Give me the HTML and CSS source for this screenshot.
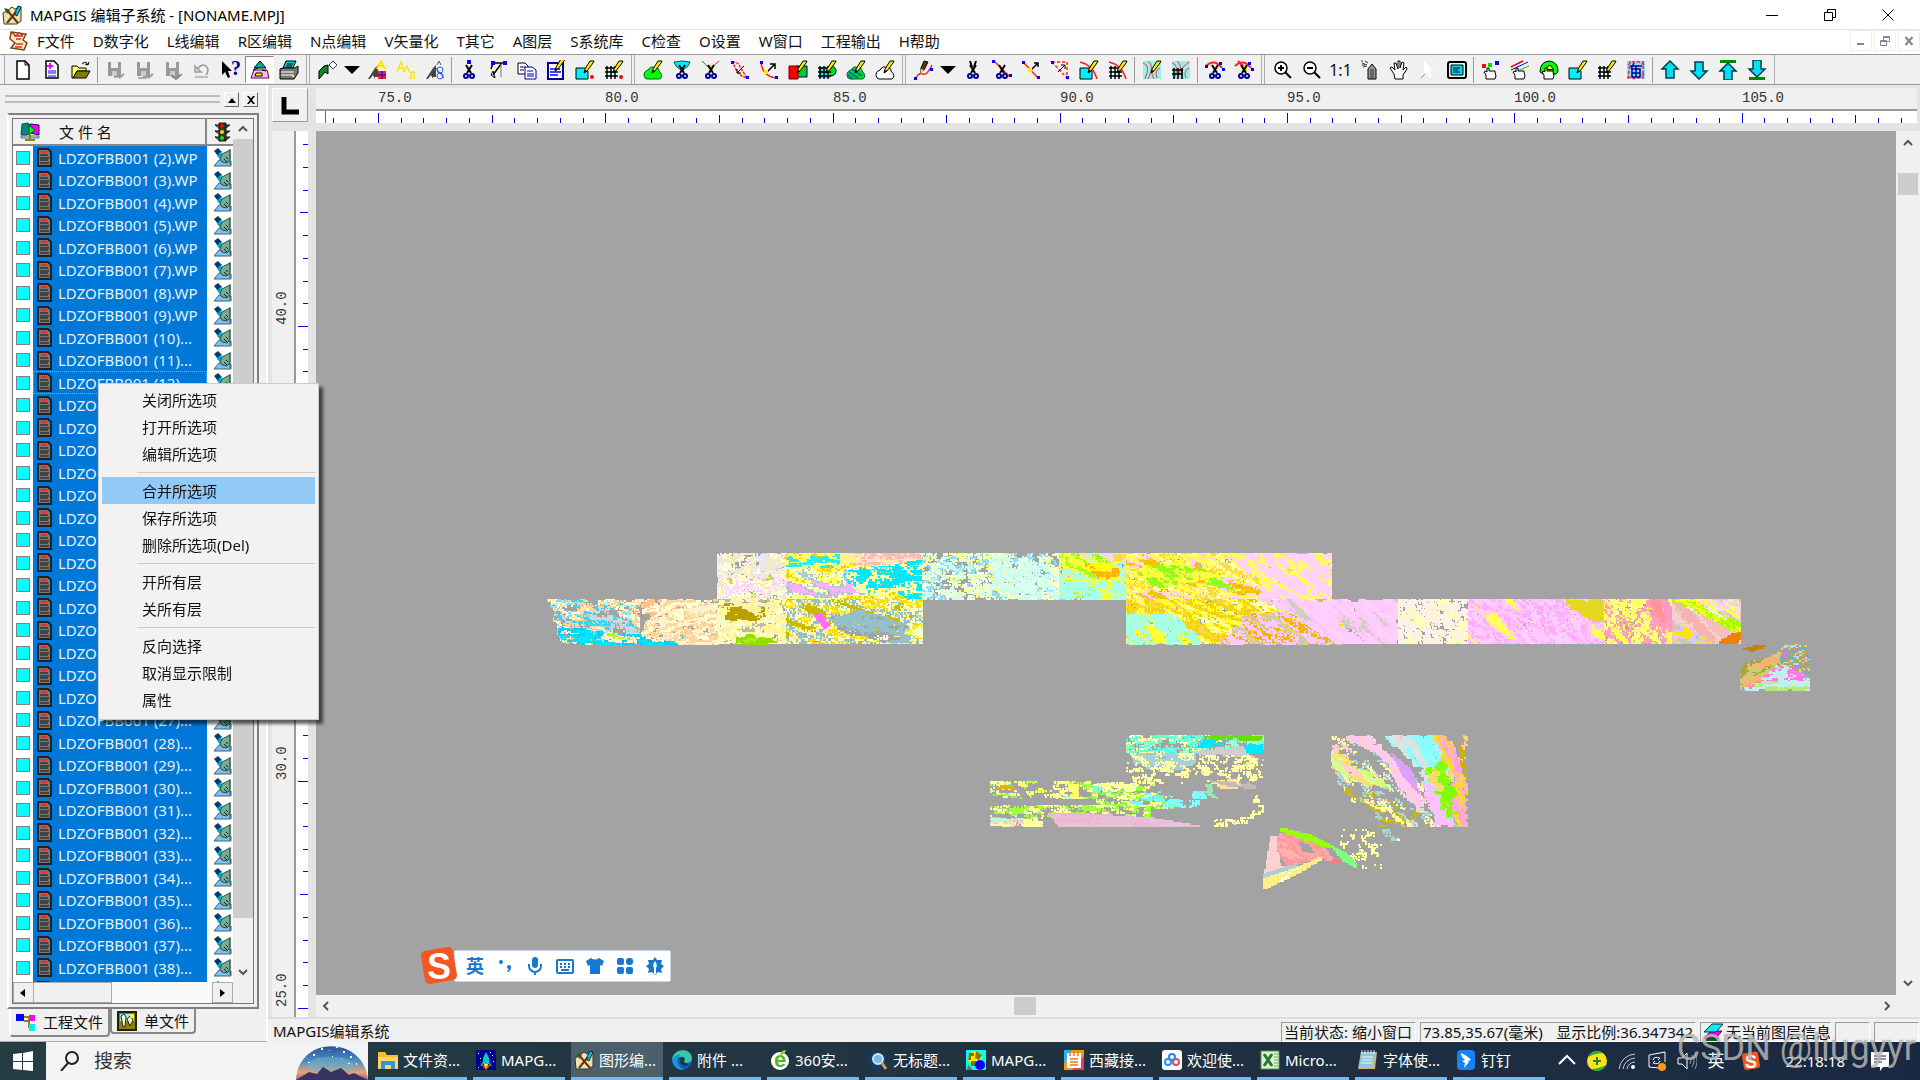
FILE: index.html
```
<!DOCTYPE html>
<html lang="zh-CN">
<head>
  <meta charset="UTF-8" />
  <meta name="viewport" content="width=device-width, initial-scale=1" />
  <title>MAPGIS 编辑子系统 - [NONAME.MPJ]</title>
  <link rel="stylesheet" href="styles.css">
</head>
<body>

  <!-- Title bar -->
  <header class="titlebar">
    <svg class="icon" viewBox="0 0 20 20" data-icon="app"></svg>
    <h1>MAPGIS 编辑子系统 - [NONAME.MPJ]</h1>
    <div class="window-buttons">
      <button aria-label="最小化"><svg viewBox="0 0 12 12"><path d="M0 6.5h12"/></svg></button>
      <button aria-label="还原"><svg viewBox="0 0 12 12"><path d="M.5 3.500h8v8h-8zM3.500 3V.5h8v8H9"/></svg></button>
      <button aria-label="关闭"><svg viewBox="0 0 12 12"><path d="M.5.5l11 11M11.500.5l-11 11"/></svg></button>
    </div>
  </header>

  <!-- Menu bar -->
  <nav class="menubar">
    <svg class="icon" viewBox="0 0 20 20" data-icon="doc"></svg>
    <button>F文件</button>
    <button>D数字化</button>
    <button>L线编辑</button>
    <button>R区编辑</button>
    <button>N点编辑</button>
    <button>V矢量化</button>
    <button>T其它</button>
    <button>A图层</button>
    <button>S系统库</button>
    <button>C检查</button>
    <button>O设置</button>
    <button>W窗口</button>
    <button>工程输出</button>
    <button>H帮助</button>
    <div class="child-buttons">
      <button aria-label="最小化子窗口"><svg viewBox="0 0 12 12"><path d="M2 9h7"/></svg></button>
      <button aria-label="还原子窗口"><svg viewBox="0 0 12 12"><path class="thin" d="M1.500 5.500h6v5h-6zM1 6.500h7M4.500 5V1.500h6v5H8M4 2.500h7"/></svg></button>
      <button aria-label="关闭子窗口"><svg viewBox="0 0 12 12"><path d="M2.500 2l7 8M9.500 2l-7 8"/></svg></button>
    </div>
  </nav>

  <!-- Filled from the icon groups in app.js -->
  <div class="toolbar" id="toolbar"></div>

  <main class="main">
    <aside class="sidebar">
      <div class="dock-head">
        <div class="dock-grip"></div>
        <button aria-label="收起"><svg viewBox="0 0 10 10"><path d="M1 8l4-5 4 5z"/></svg></button>
        <button aria-label="关闭面板"><svg viewBox="0 0 10 10"><path d="M1 1h2l2 2.500L7 1h2L6 5l3 4H7L5 6.500 3 9H1l3-4z"/></svg></button>
      </div>

      <div class="tree-frame">
        <div class="tree">
          <div class="tree-view">
            <table class="files">
              <colgroup><col class="col-check"><col><col class="col-edit"></colgroup>
              <thead>
                <tr>
                  <th colspan="2"><span class="th-name"><svg class="icon" viewBox="0 0 20 20" data-icon="tree"></svg>文 件 名</span></th>
                  <th><svg class="icon" viewBox="0 0 20 20" data-icon="light"></svg></th>
                </tr>
              </thead>
              <tbody id="fileRows"></tbody>
            </table>
          </div>
          <div class="scroll-v">
            <button aria-label="向上"><svg viewBox="0 0 10 10"><path d="M1 7l4-4 4 4"/></svg></button>
            <div class="thumb tree-thumb"></div>
            <button aria-label="向下"><svg viewBox="0 0 10 10"><path d="M1 3l4 4 4-4"/></svg></button>
          </div>
          <div class="tree-hscroll">
            <button aria-label="向左"><svg viewBox="0 0 10 10"><path d="M7 1v8L2 5z"/></svg></button>
            <div class="tree-hthumb"></div>
            <button aria-label="向右"><svg viewBox="0 0 10 10"><path d="M3 1v8l5-4z"/></svg></button>
          </div>
        </div>
      </div>

      <div class="tabs">
        <button class="tab active"><svg class="icon" viewBox="0 0 20 20" data-icon="project"></svg>工程文件</button>
        <button class="tab"><svg class="icon" viewBox="0 0 20 20" data-icon="single"></svg>单文件</button>
      </div>

      <!-- Context menu of the file list -->
      <div class="context-menu">
        <button>关闭所选项</button>
        <button>打开所选项</button>
        <button>编辑所选项</button>
        <hr>
        <button class="selected">合并所选项</button>
        <button>保存所选项</button>
        <button>删除所选项(Del)</button>
        <hr>
        <button>开所有层</button>
        <button>关所有层</button>
        <hr>
        <button>反向选择</button>
        <button>取消显示限制</button>
        <button>属性</button>
      </div>
    </aside>

    <section class="workspace">
      <div class="corner"><button aria-label="标尺原点"><svg viewBox="0 0 18 18"><path d="M3 0v15h15" /></svg></button></div>
      <svg class="ruler-h" id="rulerH"></svg>
      <svg class="ruler-v" id="rulerV"></svg>
      <div class="map">
        <canvas id="map"></canvas>
        <div class="ime">
          <svg class="ime-logo" viewBox="0 0 40 40">
            <path d="M5 5 29 1q4 0 5 4l4 24q0 4-4 5l-23 4q-4 0-5-4L2 10q0-4 3-5z" fill="#f4561f"/>
            <text x="20" y="33" text-anchor="middle">S</text>
          </svg>
          <div class="ime-bar">
            <button>英</button>
            <button aria-label="标点"><svg viewBox="0 0 18 18"><circle cx="5" cy="5" r="2"/><circle cx="13" cy="10" r="2"/><path d="M15 10q0 4-3 5l-1-1q2-1 2-3z"/></svg></button>
            <button aria-label="语音"><svg viewBox="0 0 18 18"><rect x="6" y="0" width="6" height="11" rx="3"/><path d="M3 7v2a6 6 0 0 0 12 0V7M9 15v3" fill="none" stroke="#1678d3" stroke-width="2"/></svg></button>
            <button aria-label="键盘"><svg viewBox="0 0 18 18"><rect x="1" y="3" width="16" height="13" rx="1" fill="none" stroke="#1678d3" stroke-width="2"/><path d="M4 6h2v2H4zM8 6h2v2H8zM12 6h2v2h-2zM4 9h2v2H4zM8 9h2v2H8zM12 9h2v2h-2zM5 12h8v2H5z"/></svg></button>
            <button aria-label="皮肤"><svg viewBox="0 0 18 18"><path d="M5 1q4 3 8 0l5 3-2 5-2-1v9H4V8L2 9 0 4z"/></svg></button>
            <button aria-label="工具箱"><svg viewBox="0 0 18 18"><rect x="1" y="1" width="7" height="7" rx="2"/><rect x="10" y="1" width="7" height="7" rx="3"/><rect x="1" y="10" width="7" height="7" rx="2"/><rect x="10" y="10" width="7" height="7" rx="2"/></svg></button>
            <button aria-label="设置"><svg viewBox="0 0 18 18"><path d="M9 0l2 3 5 0-1 4 3 2-3 3 1 4-4-1-3 3-3-3-4 1 1-4-3-3 3-2-1-4 5 0z"/><path d="M9 4q3 4 1 7v6H8v-6q-2-3 1-7z" fill="#fff"/></svg></button>
          </div>
        </div>
      </div>
      <div class="scroll-v map-scroll">
        <button aria-label="地图向上"><svg viewBox="0 0 10 10"><path d="M1 7l4-4 4 4"/></svg></button>
        <div class="thumb map-vthumb"></div>
        <button class="last" aria-label="地图向下"><svg viewBox="0 0 10 10"><path d="M1 3l4 4 4-4"/></svg></button>
      </div>
      <div class="scroll-h">
        <button aria-label="地图向左"><svg viewBox="0 0 10 10"><path d="M7 1L3 5l4 4"/></svg></button>
        <div class="track"><div class="thumb map-hthumb"></div></div>
        <button aria-label="地图向右"><svg viewBox="0 0 10 10"><path d="M3 1l4 4-4 4"/></svg></button>
      </div>
      <footer class="status">
        <span class="status-main">MAPGIS编辑系统</span>
        <span class="pane state">当前状态: 缩小窗口</span>
        <span class="pane coords"><span>73.85,35.67(毫米)</span><span>显示比例:36.347342</span></span>
        <span class="pane layer"><svg class="icon" viewBox="0 0 20 20" data-icon="layer"></svg>无当前图层信息</span>
        <span class="pane small"></span>
        <span class="pane last"></span>
      </footer>
    </section>
  </main>

  <!-- Windows taskbar -->
  <footer class="taskbar">
    <button class="start" aria-label="开始"><svg viewBox="0 0 20 20"><path d="M0 3l9-1v8H0zM10 2l10-2v10H10zM0 11h9v8l-9-1zM10 11h10v9l-10-1z" fill="#fff"/></svg></button>
    <div class="search">
      <svg class="lens" viewBox="0 0 20 20"><circle cx="12" cy="7" r="6"/><path d="M8 12l-7 8"/></svg>
      <input type="text" placeholder="搜索" aria-label="搜索">
      <svg class="art" viewBox="0 0 72 38">
        <defs>
          <linearGradient id="sky" x1="0" y1="0" x2="0" y2="1">
            <stop offset="0" stop-color="#27408f"/><stop offset=".5" stop-color="#4a8fc4"/><stop offset=".8" stop-color="#e6a27c"/><stop offset="1" stop-color="#9b6280"/>
          </linearGradient>
          <clipPath id="dome"><path d="M0 38C2-7 68-7 72 38z"/></clipPath>
        </defs>
        <g clip-path="url(#dome)">
          <rect width="72" height="38" fill="url(#sky)"/>
          <ellipse cx="35" cy="24" rx="24" ry="9" fill="#73b4be" opacity=".5"/>
          <path d="M0 38l13-8 8 2 6-7 8 5 10-4 8 7 5-2 14 7z" fill="#363361"/>
          <path d="M17 12h2v2h-2zM25 6h2v2h-2zM33 8h1v1h-1zM40 4h2v2h-2zM47 9h2v2h-2zM54 14h2v2h-2zM12 20h2v1h-2zM60 21h1v2h-1zM22 16h1v1h-1zM45 16h1v1h-1zM30 4h1v1h-1zM52 21h2v1h-2zM36 14h1v1h-1z" fill="#fff"/>
        </g>
      </svg>
    </div>
    <div class="tasks" id="tasks"></div>
    <div class="tray">
      <svg class="tray-icon" viewBox="0 0 20 20"><path d="M2 13l8-8 8 8" fill="none" stroke="#fff" stroke-width="2"/></svg>
      <svg class="tray-icon" viewBox="0 0 20 20"><circle cx="10" cy="10" r="10" fill="#ffe11d"/><path d="M1 6A10 10 0 0 1 16 2q-7 0-15 4zM19 14A10 10 0 0 1 4 18q8 0 15-4z" fill="#1eaa4b"/><path d="M10 6v8M6 10h8" stroke="#168a32" stroke-width="2"/></svg>
      <svg class="tray-icon" viewBox="0 0 20 20"><g fill="none" stroke="#ccd" stroke-width="1"><path d="M2 18A17 17 0 0 1 18 3M6 18A13 13 0 0 1 18 7M10 18A8 8 0 0 1 18 11"/></g><circle cx="16" cy="16" r="2" fill="#fff"/></svg>
      <svg class="tray-icon" viewBox="0 0 20 20"><path d="M12 17l-10-1V4l16-3v10" fill="none" stroke="#fff"/><path d="M6 9q1-4 7-2l-2 2M13 10q-1 4-7 2l2-2" fill="none" stroke="#fff"/><circle cx="15" cy="16" r="4" fill="#ff9a13"/></svg>
      <svg class="tray-icon" viewBox="0 0 20 20"><path d="M1 7h4l5-5v16l-5-5H1z" fill="none" stroke="#fff"/><path d="M13 7q2 3 0 6M15 4q4 6 0 12M18 2q4 8 0 16" fill="none" stroke="#8b97a6"/></svg>
      <span class="lang">英</span>
      <svg class="tray-icon sogou" viewBox="0 0 40 40"><path d="M5 5 29 1q4 0 5 4l4 24q0 4-4 5l-23 4q-4 0-5-4L2 10q0-4 3-5z" fill="#f4561f"/><text x="20" y="33" text-anchor="middle">S</text></svg>
      <time>22:18:18</time>
      <svg class="tray-icon note" viewBox="0 0 20 20"><path d="M1 1h18v15h-6l-3 4v-4H1z" fill="#fff"/><path d="M4 5h12M4 8h12M4 11h8" stroke="#1c2c40" stroke-width="1"/></svg>
    </div>
    <span class="watermark">CSDN @liugyyr</span>
  </footer>

  <script src="app.js"></script>
</body>
</html>
```

FILE: styles.css
```
* {
  box-sizing: border-box;
}
body {
  margin: 0;
  height: 100vh;
  display: flex;
  flex-direction: column;
  overflow: hidden;
  background: #f0f0f0;
  color: #111;
  font-family: "Noto Sans", "Noto Sans CJK SC", sans-serif;
  font-size: 15px;
  line-height: 20px;
}
button {
  font: inherit;
  color: inherit;
  background: none;
  border: none;
  padding: 0;
  margin: 0;
  white-space: nowrap;
}
svg {
  display: block;
  flex: none;
}
.icon {
  width: 20px;
  height: 20px;
}

/* Title and menu */
.titlebar {
  height: 29px;
  display: flex;
  align-items: center;
  gap: 8px;
  padding-left: 2px;
  background: #fff;
}
.titlebar h1 {
  margin: 0;
  font-size: 15px;
  font-weight: normal;
  color: #000;
}
.window-buttons {
  margin-left: auto;
  display: flex;
  margin-right: 3px;
}
.window-buttons button {
  width: 58px;
  height: 28px;
  display: flex;
  align-items: center;
  justify-content: center;
}
.window-buttons svg {
  width: 12px;
  height: 12px;
  fill: none;
  stroke: #000;
}
.menubar {
  height: 25px;
  display: flex;
  align-items: center;
  gap: 18px;
  padding: 0 0 3px 9px;
  background: #fff;
  border-top: 1px solid #e3e3e3;
}
.menubar .icon {
  margin-right: -10px;
}
.child-buttons {
  margin-left: auto;
  display: flex;
  gap: 2px;
}
.child-buttons button {
  width: 22px;
  height: 21px;
  padding: 4px;
  border: 1px solid #eee;
}
.child-buttons svg {
  width: 12px;
  height: 12px;
  fill: none;
  stroke: #7b8794;
  stroke-width: 2;
}
.child-buttons .thin {
  stroke-width: 1;
}

/* Toolbar */
.toolbar {
  height: 31px;
  display: flex;
  border-top: 1px solid #999;
  border-bottom: 1px solid #999;
  padding-left: 4px;
}
.tool-group {
  display: flex;
  align-items: center;
  padding: 0 3px;
  margin-right: 2px;
  border-left: 1px solid #aaa;
  border-right: 1px solid #aaa;
}
.tool {
  width: 29px;
  height: 27px;
  display: flex;
  align-items: center;
  justify-content: center;
  font-size: 16px;
}
.tool.drop {
  width: 20px;
}
.tool.pressed {
  background: #fafafa;
  border: 1px solid #888;
  border-right-color: #fff;
  border-bottom-color: #fff;
}
.tool-sep {
  width: 1px;
  height: 26px;
  margin: 0 2px;
  background: #999;
}

/* Sidebar */
.main {
  flex: 1;
  min-height: 0;
  display: flex;
}
.sidebar {
  position: relative;
  width: 268px;
  flex: none;
  display: flex;
  flex-direction: column;
  border-right: 2px solid #fff;
  border-bottom: 1px solid #aaa;
}
.dock-head {
  height: 28px;
  display: flex;
  align-items: center;
  gap: 4px;
  padding: 0 8px 0 5px;
}
.dock-grip {
  flex: 1;
  height: 8px;
  border-top: 2px solid #bbb;
  border-bottom: 2px solid #bbb;
}
.dock-head button {
  width: 15px;
  height: 15px;
  padding: 2px;
  border: 1px solid #fff;
  border-right-color: #666;
  border-bottom-color: #666;
}
.dock-head svg {
  width: 10px;
  height: 10px;
}
.tree-frame {
  flex: 1;
  min-height: 0;
  display: flex;
  margin: 0 7px;
  padding: 3px;
  border: 2px solid #808080;
  border-left-color: #fff;
}
.tree {
  flex: 1;
  min-height: 0;
  display: grid;
  grid-template-columns: 1fr 20px;
  grid-template-rows: 1fr 21px;
  border: 1px solid #777;
}
.tree-view {
  overflow: hidden;
  background: #fff;
  min-height: 0;
}
.files {
  width: 100%;
  table-layout: fixed;
  border-collapse: separate;
  border-spacing: 0;
}
.col-check {
  width: 20px;
}
.col-edit {
  width: 26px;
}
.files th {
  height: 27px;
  padding: 0 2px;
  background: #f0f0f0;
  border-right: 2px solid #888;
  border-bottom: 2px solid #888;
  font-weight: normal;
  text-align: left;
}
.files th:last-child {
  border-right: none;
  padding-left: 5px;
}
.th-name {
  display: flex;
  align-items: center;
  gap: 19px;
  padding-left: 5px;
}
.files td {
  height: 23px;
  padding: 0;
}
.files tr:nth-child(even) td {
  height: 22px;
}
.files input {
  appearance: none;
  display: block;
  width: 14px;
  height: 14px;
  margin: 0 3px;
  border: 1px solid #808080;
  background: #0ff;
}
.files .name-cell {
  padding-left: 4px;
  background: #0078d7;
  color: #e4f1fc;
  font-size: 15px;
}
.files .focus .name-cell {
  outline: 1px dotted #e09050;
  outline-offset: -1px;
}
.files .edit-cell {
  padding-left: 5px;
  border-left: 1px solid #fff;
}
.name {
  display: flex;
  align-items: center;
  gap: 6px;
  height: 22px;
  white-space: nowrap;
}
.name svg {
  width: 15px;
  height: 19px;
}
.edit-cell svg {
  width: 19px;
  height: 19px;
}
.scroll-v {
  display: flex;
  flex-direction: column;
  justify-content: space-between;
  background: #f0f0f0;
}
.scroll-v button,
.scroll-h button {
  width: 20px;
  height: 20px;
  padding: 5px;
}
.scroll-v svg,
.scroll-h svg {
  width: 10px;
  height: 10px;
  fill: none;
  stroke: #555;
  stroke-width: 2;
}
.thumb {
  background: #cdcdcd;
}
.tree-thumb {
  flex: 1;
  margin-bottom: 44px;
}
.tree-hscroll {
  display: flex;
  background: #fafafa;
}
.tree-hscroll button {
  width: 21px;
  padding: 4px;
  background: #f0f0f0;
  border: 1px solid #aaa;
}
.tree-hscroll button:last-child {
  margin-left: auto;
}
.tree-hscroll svg {
  width: 10px;
  height: 10px;
}
.tree-hthumb {
  width: 78px;
  background: #f0f0f0;
  border: 1px solid #aaa;
  border-left: none;
}
.tabs {
  height: 32px;
  display: flex;
  align-items: flex-start;
  padding-left: 9px;
}
.tab {
  display: flex;
  align-items: center;
  gap: 7px;
  height: 25px;
  padding: 0 5px;
  border: 2px solid #888;
  border-top: none;
  border-radius: 0 0 4px 4px;
}
.tab.active {
  height: 28px;
  border-left-color: #fff;
}

/* Context menu */
.context-menu {
  position: absolute;
  left: 98px;
  top: 298px;
  width: 221px;
  padding: 2px 3px 6px;
  background: #f2f2f2;
  border: 1px solid #ccc;
  box-shadow: 4px 4px 3px rgba(0,0,0,0.6);
  z-index: 2;
}
.context-menu button {
  display: block;
  width: 100%;
  height: 27px;
  padding-left: 40px;
  text-align: left;
}
.context-menu .selected {
  background: #91c9f7;
}
.context-menu hr {
  height: 1px;
  margin: 5px 0 4px 35px;
  border: none;
  background: #ccc;
}

/* Map window */
.workspace {
  flex: 1;
  min-width: 0;
  display: grid;
  grid-template-columns: 48px 1fr 24px;
  grid-template-rows: 46px 1fr 22px 25px;
  background: #e4e4e4;
}
.corner {
  padding: 3px 4px;
}
.corner button {
  width: 36px;
  height: 34px;
  padding: 8px;
  background: #f0f0f0;
  border: 1px solid #fff;
  border-right-color: #999;
  border-bottom-color: #999;
}
.corner svg {
  width: 18px;
  height: 18px;
  fill: none;
  stroke: #000;
  stroke-width: 5;
}
.ruler-h {
  grid-column: 2 / 4;
  width: 100%;
  height: 38px;
}
.ruler-v {
  grid-row: 2 / 4;
  width: 40px;
  height: 100%;
}
.ruler-h text,
.ruler-v text {
  font: 14px "Liberation Mono", monospace;
  fill: #333;
}
.map {
  position: relative;
  grid-column: 2;
  grid-row: 2;
  min-height: 0;
  overflow: hidden;
  background: #a3a3a3;
}
.map canvas {
  display: block;
}
.map-scroll {
  justify-content: flex-start;
  padding: 2px;
}
.map-vthumb {
  height: 22px;
  margin-top: 20px;
}
.map-scroll .last {
  margin-top: auto;
}
.scroll-h {
  grid-column: 2 / 4;
  grid-row: 3;
  display: flex;
  align-items: center;
  justify-content: space-between;
  padding-right: 23px;
  background: #f0f0f0;
}
.track {
  flex: 1;
  height: 18px;
}
.map-hthumb {
  width: 22px;
  height: 18px;
  margin-left: 44%;
}
.status {
  grid-column: 1 / 4;
  display: flex;
  gap: 4px;
  padding: 3px 1px 0 5px;
  border-top: 2px solid #ddd;
  background: #f0f0f0;
  line-height: 18px;
}
.status-main {
  flex: 1;
}
.pane {
  height: 20px;
  padding: 0 2px;
  border: 1px solid #fff;
  border-top-color: #999;
  border-left-color: #999;
  white-space: nowrap;
  overflow: hidden;
}
.pane.state {
  width: 135px;
}
.pane.coords {
  width: 276px;
  display: flex;
  justify-content: space-between;
}
.pane.layer {
  width: 131px;
  display: flex;
  gap: 3px;
}
.pane.small {
  width: 35px;
}
.pane.last {
  width: 45px;
}

/* Sogou input bar */
.ime {
  position: absolute;
  left: 103px;
  bottom: 9px;
  display: flex;
  align-items: center;
}
.ime-logo {
  width: 40px;
  height: 40px;
  z-index: 1;
}
.ime-logo text,
.sogou text {
  font: bold 36px "Liberation Sans", sans-serif;
  fill: #fff;
}
.ime-bar {
  display: flex;
  align-items: center;
  height: 32px;
  margin-left: -5px;
  padding: 0 0 0 5px;
  background: #fff;
  border: 1px solid #c4d9ee;
  border-radius: 2px;
}
.ime-bar button {
  width: 30px;
  display: flex;
  justify-content: center;
  color: #1678d3;
  font-size: 18px;
  font-weight: bold;
}
.ime-bar svg {
  width: 18px;
  height: 18px;
  fill: #1678d3;
}

/* Taskbar */
.taskbar {
  position: relative;
  height: 38px;
  display: flex;
  background: linear-gradient(90deg, #243d45 0%, #203341 50%, #1a2942 100%);
  color: #fff;
}
.start {
  width: 46px;
  display: flex;
  align-items: center;
  justify-content: center;
}
.start svg {
  width: 20px;
  height: 20px;
}
.search {
  width: 322px;
  display: flex;
  align-items: center;
  gap: 14px;
  padding-left: 14px;
  background: #f3f3f3;
}
.lens {
  width: 20px;
  height: 20px;
  fill: none;
  stroke: #222;
  stroke-width: 2;
}
.search input {
  flex: 1;
  min-width: 0;
  border: none;
  padding: 0;
  background: none;
  font: 19px/28px "Noto Sans", "Noto Sans CJK SC", sans-serif;
}
.search input::placeholder {
  color: #333;
}
.art {
  width: 72px;
  height: 38px;
}
.tasks {
  flex: 1;
  min-width: 0;
  display: flex;
  gap: 6px;
  padding-left: 7px;
}
.task {
  width: 92px;
  display: flex;
  align-items: center;
  gap: 5px;
  padding-left: 3px;
  border-bottom: 3px solid #76b9ed;
  overflow: hidden;
}
.task.active {
  background: #4b606a;
}
.tray {
  display: flex;
  align-items: center;
  gap: 10px;
  padding-right: 30px;
}
.tray-icon {
  width: 20px;
  height: 20px;
}
.lang {
  width: 20px;
  font-size: 17px;
}
.sogou {
  margin: 0 4px;
}
.tray time {
  margin: 0 15px 0 10px;
}
.watermark {
  position: absolute;
  right: 4px;
  top: -14px;
  font: 36px/40px Roboto, sans-serif;
  color: rgba(255,255,255,0.6);
  text-shadow: 0 0 1px rgba(0,0,0,0.6);
}
```

FILE: app.js
```
// ---------- icons, all on a 20x20 grid ----------
const pencil = '<path d="M19 1l-4 0-5 8-1 4 3-2 6-8z" fill="#ffe600" stroke="#000"/><path d="M9 13l1-3 2 1z"/>';
const scissors = '<path d="M7 5l5 8M13 5l-5 8" stroke="#000" stroke-width="2"/><g fill="none" stroke="#00009c" stroke-width="2"><circle cx="7" cy="16" r="2"/><circle cx="13" cy="16" r="2"/></g>';
const hand = '<path d="M5 19v-4l-2-3 2-1 1 1V8h2v3h2v0h2v0h2v1l1 4-1 3z" fill="#fff" stroke="#000"/>';
const grid = '<path d="M2 7h11v11H2z" fill="#dff"/><path d="M1 8h13M1 12h13M1 16h13M3 6v13M7 6v13M11 6v13" stroke="#000" stroke-width="1.500"/>';
const page = '<path d="M1 8h9l3 3v8H1z" fill="#00f0ff" stroke="#000"/>';
const nodes = '<path d="M1 1h3v3H1zM16 16h3v3h-3z" fill="#00f"/>';
const floppy = '<path d="M3 2h13v14H3z" fill="#999"/><path d="M6 2h7v6H6z" fill="#eee"/><path d="M7 11h5v5H7z" fill="#ccc"/><path d="M9 17l7-1M14 18l5-4" stroke="#999" stroke-width="2"/>';
const blob = 'M2 18q-3-6 3-8 3-5 7-2 4-1 4 3 5 5 1 8H4z';
const contour = '<path d="M1 1h18v18H1z" fill="#9ee"/><g fill="none" stroke="#e44"><path d="M1 3q8 2 2 16M6 1q7 5 0 18M18 2q-12 8-6 17M18 8q-6 3-3 10"/></g>';
const arrow = '<path d="M10 1l8 8h-4v9H6V9H2z" fill="#00e0f0" stroke="#003c50" stroke-width="1.500"/>';
const man = '<path d="M1 19l7-11 3-3v12H8v2l-2-4-3 4z" fill="#444"/>';

const icons = {
  app: '<path d="M1 8l4-2 5-4 3 2 6-2v14l-4 3H2z" fill="#f4dfa6" stroke="#333"/><path d="M2 3l6 2-3 4z" fill="#178a3a"/><path d="M12 9l4-8 3 1-4 9z" fill="#00c3e8" stroke="#123"/><path d="M4 4l12 14M14 7L5 18" stroke="#5d3418" stroke-width="2"/>',
  doc: '<path d="M2 1l15 2-3 6 4 3-3 7-13-2 4-5-5-4z" fill="#ffe9b8" stroke="#7b4518" stroke-width="1.500"/><path d="M5 5l9 0M7 8l5 0M7 13l7 0M6 16l7 0M3 2l4 3 3-3 4 2" stroke="#c33" stroke-width="1.500" fill="none"/>',
  'new': '<path d="M4 1h8l4 4v14H4z" fill="#fff" stroke="#000" stroke-width="1.500"/><path d="M12 1v4h4" fill="none" stroke="#000"/>',
  report: '<path d="M4 1h8l4 4v13H4z" fill="#fff" stroke="#000" stroke-width="1.500"/><path d="M8 3v6M5 6h6" stroke="#f0f" stroke-width="2"/><path d="M6 11h8M6 13h8M6 16h8" stroke="#00f"/>',
  open: '<path d="M1 6h5l2 2h7v3H6l-4 7H1z" fill="#ff6" stroke="#000"/><path d="M6 11h13l-4 7H2z" fill="#808000" stroke="#000"/><path d="M11 4q4-4 6 1l1-3M17 5l-3-1" fill="none" stroke="#000"/>',
  save: floppy,
  saveAs: floppy + '<path d="M4 18h9" stroke="#aaa" stroke-width="2"/>',
  saveAll: floppy + '<path d="M8 15l5 4 4-4" stroke="#888" fill="none" stroke-width="2"/>',
  undo: '<path d="M3 6l0 6h6zM5 10q4-7 9-4 4 4 0 9" fill="none" stroke="#999" stroke-width="1.500"/><path d="M3 17h13" stroke="#bbb" stroke-width="2"/>',
  help: '<path d="M1 1v14l3-3 3 6 2-1-2-6h4z"/><text x="10" y="15" fill="#00009c" font-size="20" font-weight="bold" font-family="Liberation Serif">?</text>',
  board: '<path d="M10 1l6 7H4z" fill="#0a9" stroke="#000"/><path d="M4 10h13l2 8H1z" fill="#f8bbf0" stroke="#5b0060"/><path d="M6 13h6v3H5z" fill="#ff0" stroke="#000"/><path d="M3 10l5-2M12 10l4 1" stroke="#000"/>',
  print: '<path d="M7 1h10l-3 7H4z" fill="#0cc" stroke="#000"/><path d="M8 4h6M7 6h6" stroke="#000"/><path d="M1 9l3-1h12l3-2v7l-4 6H1z" fill="#777" stroke="#000"/><path d="M2 12h13M2 15h12" stroke="#fff"/><path d="M13 16h2" stroke="#ff0" stroke-width="2"/>',
  point: '<path d="M1 19v-8l5-5 4-1v9l-3-2z" fill="#0a8a1a" stroke="#000"/><path d="M11 5l4-4 4 4-4 4z" fill="#fff" stroke="#446"/>',
  drop: '<path d="M2 6h16l-8 8z"/>',
  pointA: man + '<path d="M10 9l4-8 4 8M11 6h6" stroke="#ffe600" fill="none" stroke-width="2"/><path d="M11 11h8v8h-8z" fill="#e22"/><path d="M11 15h8M15 11v8" stroke="#00f"/>',
  letters: '<path d="M1 12l4-10 3 10M3 8h4M8 12l3-6 3 7M14 18l2-6h2v6z" stroke="#ffe600" stroke-width="1.500" fill="none"/>',
  pointB: man + '<g fill="none" stroke="#35d"><circle cx="15" cy="10" r="3"/><circle cx="15" cy="16" r="3"/><path d="M11 8l8 10"/></g><path d="M12 5l2-4 2 4" fill="none" stroke="#555"/>',
  cutNode: '<path d="M8 0h4v4H8z" fill="#00f"/>' + scissors,
  move: '<path d="M5 3h13M13 4L5 15M5 3l-2 6" stroke="#000" fill="none" stroke-width="1.500"/><path d="M3 15l4 3-2-7z" fill="none" stroke="#000"/><path d="M3 1h4v4H3zM15 1h4v4h-4z" fill="#00f"/><path d="M13 4v13" stroke="#777"/>',
  copy: '<path d="M1 3h7l3 3v8H1z" fill="#fff" stroke="#000"/><path d="M8 7h7l4 3v9H8z" fill="#fff" stroke="#00009c"/><path d="M3 7h5M3 10h4M10 11h6M10 14h7M10 16h7" stroke="#00009c"/>',
  editText: '<path d="M2 3h15v16H2z" fill="#fff" stroke="#00009c" stroke-width="2"/><path d="M4 9h10M4 12h11M4 15h8" stroke="#00f" stroke-width="1.500"/><g transform="translate(0 -2)">' + pencil + '</g>',
  pastePen: page + pencil + '<circle cx="17" cy="17" r="2" fill="#f00"/>',
  gridPen: grid + pencil + '<circle cx="17" cy="17" r="2" fill="#f00"/>',
  area: `<path d="${blob}" fill="#0f0" stroke="#063"/>` + pencil,
  areaCut: '<path d="M2 2q8-2 16 0l-2 4-6 5-6-5z" fill="#00f0ff" stroke="#055"/>' + scissors,
  arcCut: '<path d="M1 1l8 8 9-8" stroke="#f22" fill="none"/><path d="M8 5h4v5H8z" fill="#ffe600"/>' + scissors,
  arcNode: '<path d="M2 2q7 0 8 5l7 11q-10-2-14-16" fill="none" stroke="#f22" stroke-width="1.500" stroke-dasharray="3 1"/><path d="M14 6l-7 7M7 9v4h4" stroke="#000" fill="none"/>' + nodes,
  arcMove: '<path d="M2 2q1 14 15 16" fill="none" stroke="#f22" stroke-width="1.500"/><path d="M7 13l9-9M11 4h5v5" stroke="#000" fill="none" stroke-width="1.500"/><path d="M5 10h4v4H5z" fill="#ffe600"/>' + nodes,
  areaRed: '<path d="M8 6h11v11H8z" fill="#0c3" stroke="#005"/><path d="M1 6h9v13H1z" fill="#f00" stroke="#600"/>' + pencil,
  areaGrid: '<circle cx="14" cy="11" r="5" fill="#0d2" stroke="#004"/><path d="M2 7h11v11H2z" fill="#0ee"/>' + grid.slice(grid.indexOf('/>') + 2) + pencil,
  areaHatch: `<path d="${blob}" fill="#0d2" stroke="#063"/><path d="M3 12l9 6M6 9l10 7M2 15l5 4" stroke="#00709c" stroke-width="2"/>` + pencil,
  areaEmpty: `<path d="${blob}" fill="#fff" stroke="#000"/>` + pencil,
  line: '<path d="M2 18q3-6 7-4t9-9" fill="none" stroke="#f22" stroke-width="1.500"/><path d="M10 1l4 1-4 8-3 3v-5z" fill="#631" stroke="#000"/><path d="M7 9l3 1-3 4z" fill="#ffe600"/><path d="M0 17h3v3H0zM16 8h3v3h-3z" fill="#00f"/>',
  cut: scissors + '<path d="M7 1l2 6M13 1l-2 6" stroke="#000" stroke-width="2"/>',
  cutLine: '<path d="M2 1l16 16" stroke="#f22" stroke-width="1.500"/>' + scissors + '<path d="M0 0h3v3H0zM17 14h3v3h-3z" fill="#00f"/>',
  lineMove: '<path d="M2 2l15 16" stroke="#f22" stroke-width="1.500"/><path d="M9 11l8-8M13 3h4v4" stroke="#000" fill="none" stroke-width="1.500"/><path d="M7 8h4v4H7z" fill="#ffe600"/>' + nodes,
  lineCopy: '<path d="M2 2h15v16zM2 2l15 0" fill="none" stroke="#f22" stroke-width="1.500" stroke-dasharray="3 2"/><path d="M8 12l7-7M11 5h4v4" stroke="#000" fill="none"/>' + nodes,
  linePage: page + '<path d="M1 2q13 3 17 17" fill="none" stroke="#f22" stroke-width="1.500"/>' + pencil,
  lineGrid: grid + '<path d="M1 2q13 3 17 17" fill="none" stroke="#f22" stroke-width="1.500"/>' + pencil,
  contour: contour + pencil,
  contourGrid: contour + '<path d="M1 10h11M1 14h11M3 8v11M7 8v11M11 8v11" stroke="#000" stroke-width="1.500"/>',
  joinCut: '<path d="M1 6q8-8 16 2" fill="none" stroke="#f22" stroke-width="2"/><path d="M0 5h3v3H0zM14 2h3v3h-3zM17 8h3v3h-3z" fill="#00f"/><path d="M8 8h3v4H8z" fill="#ffe600"/>' + scissors,
  joinX: '<path d="M1 6q8-8 16 2M4 1l8 8" fill="none" stroke="#f22" stroke-width="2"/><path d="M14 2h3v3h-3zM17 8h3v3h-3z" fill="#00f"/><path d="M9 6h4v6H9z" fill="#ffe600"/>' + scissors,
  zoomIn: '<circle cx="8" cy="8" r="6" fill="#fff" stroke="#000" stroke-width="1.500"/><path d="M5 8h6M8 5v6M12 12l6 6" stroke="#000" stroke-width="2"/>',
  zoomOut: '<circle cx="8" cy="8" r="6" fill="#fff" stroke="#000" stroke-width="1.500"/><path d="M5 8h6M12 12l6 6" stroke="#000" stroke-width="2"/>',
  spray: '<path d="M8 9l4-5 4 5v10H8z" fill="#999" stroke="#000"/><path d="M11 9v10M13 9v10M2 3l5 2M3 7l4-1M1 1h2M5 1l3 2M2 5h3" stroke="#333"/>',
  pan: '<path d="M6 19l-1-5-4-6 2-1 3 3-1-7 2 0 2 6V1h2v7l2-6 2 1-1 7 3-3 1 2-4 6v4z" fill="#fff" stroke="#000"/>',
  pointer: '<path d="M6 1l9 10h-4l3 6-2 1-3-6-3 3z" fill="#fff"/><path d="M3 18l4-4" stroke="#888"/>',
  screen: '<rect x="1" y="2" width="18" height="16" rx="2" fill="#dff" stroke="#000" stroke-width="2"/><path d="M4 5h12v10H4z" fill="#00d8e8" stroke="#000"/><path d="M6 8h7M6 10h5M6 12h7" stroke="#003"/>',
  pickPoint: '<path d="M1 4h4v4H1z" fill="#f00"/><path d="M7 3h4v4H7z" fill="#0d0"/><path d="M14 1h4v4h-4z" fill="#00f"/>' + hand,
  pickLine: '<path d="M1 7l12-6" stroke="#f00" stroke-width="1.500"/><path d="M1 10L18 2" stroke="#00f"/><path d="M5 12L19 6" stroke="#0c0"/>' + hand,
  pickArea: '<path d="M1 12q0-10 9-11 9 1 9 10-1 4-5 3l-3-3-5 4z" fill="#0f0" stroke="#000"/><path d="M6 9l5-4 4 5z" fill="#ff0" stroke="#000"/>' + hand,
  pagePen: page + pencil,
  tablePen: grid + pencil,
  find: '<path d="M1 1h18v18H1z" fill="#8de"/><path d="M2 5q8-7 16 0M2 16q8 6 16-2M4 1l-2 18M17 1v18" stroke="#e24" stroke-width="1.500" fill="none" stroke-dasharray="3 2"/><path d="M6 9h8v8H6zM4 6h12M8 3l-3 6M6 13h8M10 6v11" stroke="#00009c" stroke-width="1.500" fill="none"/>',
  up: arrow,
  down: `<g transform="rotate(180 10 10)">${arrow}</g>`,
  top: '<path d="M2 0h16v3H2z" fill="#080"/><g transform="translate(0 2)">' + arrow + '</g>',
  bottom: '<path d="M2 17h16v3H2z" fill="#080"/><g transform="rotate(180 10 9)">' + arrow + '</g>',
  tree: '<path d="M2 2l6-1 4 5-5 7H1z" fill="#088" stroke="#055"/><path d="M10 2l9 1v10l-8-2z" fill="#f0f" stroke="#206"/><path d="M9 3l6 5-6 5z" fill="#0f0" stroke="#050"/><path d="M1 14h18v2H1z" fill="#cde" stroke="#577"/><path d="M10 13v5M5 18h10" stroke="#880" stroke-width="2"/>',
  light: '<path d="M7 1h7v18H7zM3 3h15l-4 3zM3 9h15l-4 3zM3 15h15l-4 3zM3 3l5 4M3 9l5 4M3 15l5 4" stroke="#222" fill="#333"/><circle cx="10" cy="4" r="2" fill="#f00"/><circle cx="10" cy="10" r="2" fill="#fd0"/><circle cx="10" cy="16" r="2" fill="#0e0"/>',
  project: '<path d="M7 5h6v11M8 9h5" stroke="#880" stroke-width="2" fill="none"/><path d="M0 2h8v7H0z" fill="#00f"/><path d="M13 3h6v6h-6z" fill="#f0f"/><path d="M13 12h6v7h-6z" fill="#0ee"/>',
  single: '<path d="M1 1h18v18H1z" fill="#8a8200" stroke="#220" stroke-width="2"/><path d="M3 3h14v7H3z" fill="#8ef"/><path d="M4 5l3-2 2 3-1 9-2 1-1-6zM10 8l3-3 3 4-3 6z" fill="#ffc" stroke="#222"/><circle cx="15" cy="5" r="2" fill="#ff0"/>',
  layer: '<ellipse cx="9" cy="16" rx="7" ry="4" fill="#060"/><path d="M8 8h11l-6 7H1z" fill="#f0f" stroke="#222"/><path d="M9 1h11l-7 8H1z" fill="#00f0ff" stroke="#222"/>',
  folder: '<path d="M0 2h7l2 3h11v13H0z" fill="#ffb92e"/><path d="M0 7h20v12H0z" fill="#ffd75e"/><path d="M3 11h14v8h-4v-4H7v4H3z" fill="#2f94dd"/>',
  rocket: '<path d="M0 0h20v20H0z" fill="#00008b"/><path d="M10 2l3 6v6H7V8z" fill="#0cc"/><path d="M7 11l-3 5h3zM13 11l3 5h-3z" fill="#0a5"/><path d="M8 14h4l1 3-3 3-3-3z" fill="#f50"/><path d="M8 14h4l-2 4z" fill="#ff0"/><path d="M2 3h1v1H2zM16 5h1v1h-1zM4 8h1v1H4zM17 11h1v1h-1zM2 17h1v1H2zM14 2h1v1h-1z" fill="#fff"/>',
  edge: '<circle cx="10" cy="10" r="10" fill="#0c62b8"/><path d="M0 9C2-2 19-3 20 8q0 5-6 5-3 0-2-3 0-4-5-3-6 1-7 2z" fill="#37c7a6"/><path d="M0 10q3-6 9-5-5 3-3 9 2 4 6 6-10 0-12-10z" fill="#1f94dc"/><path d="M8 10q0-3 3-3 3 1 1 4 0 3 6 3-4 3-8 1-2-2-2-5z" fill="#203341"/>',
  b360: '<circle cx="10" cy="11" r="9" fill="#fff"/><text x="10" y="17" text-anchor="middle" font-size="22" font-weight="bold" font-family="Liberation Sans" fill="#55b82c">e</text><path d="M10 5q1-5 6-5-1 5-6 5z" fill="#8bd443"/>',
  lens: '<circle cx="9" cy="10" r="9" fill="#123e6b"/><circle cx="10" cy="9" r="5" fill="#73bce0" stroke="#d9e3ea" stroke-width="2"/><path d="M14 13l4 6" stroke="#c96" stroke-width="3"/>',
  globe: '<path d="M0 0h20v20H0z" fill="#0ff"/><circle cx="9" cy="8" r="7" fill="#ffe600"/><path d="M3 3h5v3H5v4H2zM10 1l6 4-3 5-4-2zM5 11h5v5H5z" fill="#7c7b00"/><circle cx="14" cy="15" r="5" fill="#00f"/><path d="M2 15l5 5H1z" fill="#7c7b00"/>',
  notes: '<rect width="20" height="20" fill="#f39b18"/><path d="M0 0h8L0 14z" fill="#27b4e3"/><path d="M20 6v14H8z" fill="#e43b66"/><path d="M3 3h14v15H3z" fill="#fff"/><path d="M6 1v5M10 1v5M14 1v5M6 9h8M6 12h8M6 15h8" stroke="#e47b22" stroke-width="1.500"/>',
  cloud: '<rect width="20" height="20" rx="3" fill="#fff"/><g fill="none" stroke-width="2"><circle cx="6" cy="12" r="3" stroke="#159bf3"/><circle cx="14" cy="12" r="3" stroke="#e9445a"/><circle cx="10" cy="7" r="3" stroke="#2f82ee"/></g>',
  excel: '<path d="M1 1h18v18H1z" fill="#dff0d8" stroke="#4d9a4b"/><path d="M14 4h4M14 7h4M14 10h4M14 13h4M14 16h4" stroke="#6aa84f"/><path d="M4 4l8 12M12 4L4 16" stroke="#287b2b" stroke-width="3"/>',
  notepad: '<path d="M3 2h16l-2 17H0z" fill="#d8b36a"/><path d="M3 2h14l-2 16H1z" fill="#8fc8dd"/><path d="M4 0v4M7 0v4M10 0v4M13 0v4M16 0v4" stroke="#eee"/><path d="M4 7h11M4 10h10M3 13h11" stroke="#dff"/>',
  ding: '<rect x="1" width="18" height="20" rx="4" fill="#1583f7"/><path d="M5 3q7 3 10 7l-3 1 1 1-5 6 1-5-3-2 3-1q-4-3-4-7z" fill="#fff"/>'
};

function iconSvg(name) {
  return `<svg class="icon" viewBox="0 0 20 20">${icons[name]}</svg>`;
}

document.querySelectorAll('[data-icon]').forEach(el => {
  el.innerHTML = icons[el.dataset.icon];
});

// ---------- toolbar ----------
const toolGroups = [
  'new report open | save saveAs saveAll undo help board print',
  'point drop pointA letters pointB | cutNode move copy editText pastePen gridPen',
  'area areaCut arcCut arcNode arcMove areaRed areaGrid areaHatch areaEmpty',
  'line drop cut cutLine lineMove lineCopy linePage lineGrid | contour contourGrid | joinCut joinX',
  'zoomIn zoomOut 1:1 spray pan pointer screen | pickPoint pickLine pickArea pagePen tablePen find | up down top bottom'
];

document.getElementById('toolbar').innerHTML = toolGroups.map(group => {
  const items = group.split(' ').map(name => {
    if (name === '|') return '<span class="tool-sep"></span>';
    if (name === '1:1') return '<button class="tool">1:1</button>';
    const extra = name === 'drop' ? ' drop' : name === 'board' ? ' pressed' : '';
    return `<button class="tool${extra}" aria-label="${name}">${iconSvg(name)}</button>`;
  });
  return `<div class="tool-group">${items.join('')}</div>`;
}).join('');

// ---------- file list ----------
const fileIcon = '<svg viewBox="0 0 15 19"><path d="M1 1h10l3 3v14H1z" fill="#777" stroke="#222" stroke-width="2"/><path d="M4 4h6" stroke="#f22" stroke-width="2"/><path d="M3 7h8M3 10h9M3 12h8M3 15h9" stroke="#111"/></svg>';
const editIcon = '<svg viewBox="0 0 19 19"><path d="M1 18l5-6 12 1v5z" fill="#86bdf0" stroke="#367"/><path d="M1 3l4-3 4 4-4 4z" fill="#073a6b"/><path d="M7 4l3 3-3 4-3-3z" fill="#00a9e0"/><path d="M9 6l8-4v9l-3 4-5-1-2-3z" fill="#76ad91" stroke="#254"/><path d="M17 1v16" stroke="#356"/><path d="M11 11l3 3M13 9l2 2" stroke="#122"/></svg>';

let rows = '';
for (let i = 2; i <= 39; i++) {
  const label = `LDZOFBB001 (${i})` + (i < 10 ? '.WP' : '...');
  rows += `<tr${i === 12 ? ' class="focus"' : ''}>
    <td><input type="checkbox" id="file${i}"></td>
    <td class="name-cell"><label class="name" for="file${i}">${fileIcon}${label}</label></td>
    <td class="edit-cell">${editIcon}</td>
  </tr>`;
}
document.getElementById('fileRows').innerHTML = rows;

// ---------- taskbar ----------
const tasks = [
  ['folder', '文件资...'], ['rocket', 'MAPG...'], ['app', '图形编...'], ['edge', '附件 ...'],
  ['b360', '360安...'], ['lens', '无标题...'], ['globe', 'MAPG...'], ['notes', '西藏接...'],
  ['cloud', '欢迎使...'], ['excel', 'Micro...'], ['notepad', '字体使...'], ['ding', '钉钉']
];
document.getElementById('tasks').innerHTML = tasks.map(([icon, text], i) =>
  `<button class="task${i === 2 ? ' active' : ''}">${iconSvg(icon)}${text}</button>`).join('');

// ---------- rulers ----------
const DEG = 45.45; // pixels per degree

function drawRulerH() {
  const svg = document.getElementById('rulerH');
  const w = svg.clientWidth - 3;
  let s = `<rect y="3" width="${w}" height="21" fill="#f0f0f0"/><rect y="24" width="${w}" height="2" fill="#999"/><rect y="26" width="${w}" height="12" fill="#fff"/>`;
  for (let k = -2; 62 + k * DEG / 2 < w; k++) {
    const x = Math.round(62 + k * DEG / 2);
    const h = k % 10 === 0 ? 10 : k % 5 === 0 ? 8 : 5;
    s += `<rect x="${x}" y="${38 - h}" width="1" height="${h}" fill="#00f"/>`;
    if (k % 10 === 0) s += `<text x="${x}" y="17">${(75 + k / 2).toFixed(1)}</text>`;
  }
  svg.innerHTML = s + '<rect x="9" y="26" width="1" height="12" fill="#f0f"/>';
}

function drawRulerV() {
  const svg = document.getElementById('rulerV');
  const h = svg.clientHeight;
  let s = `<rect x="4" width="22" height="${h}" fill="#f0f0f0"/><rect x="26" width="2" height="${h}" fill="#999"/><rect x="28" width="12" height="${h}" fill="#fff"/>`;
  for (let k = -8; 195 + k * DEG / 2 < h; k++) {
    const y = Math.round(195 + k * DEG / 2);
    const len = k % 10 === 0 ? 10 : k % 5 === 0 ? 8 : 5;
    s += `<rect x="${40 - len}" y="${y}" width="${len}" height="1" fill="#00f"/>`;
    if (k % 10 === 0) s += `<text transform="translate(18 ${y - 1}) rotate(-90)">${(40 - k / 2).toFixed(1)}</text>`;
  }
  svg.innerHTML = s;
}

// ---------- geological map ----------
function hash(x, y) {
  let h = Math.imul(x, 374761393) + Math.imul(y, 668265263) | 0;
  h = Math.imul(h ^ (h >>> 13), 1274126177);
  return ((h ^ (h >>> 16)) >>> 0) / 4294967296;
}
function noise(x, y) {
  const xi = Math.floor(x), yi = Math.floor(y);
  const fx = x - xi, fy = y - yi;
  const a = hash(xi, yi), b = hash(xi + 1, yi), c = hash(xi, yi + 1), d = hash(xi + 1, yi + 1);
  return a + (b - a) * fx + (c - a) * fy + (a - b - c + d) * fx * fy;
}
function inside(p, x, y) {
  let hit = false;
  for (let i = 0, j = p.length - 2; i < p.length; j = i, i += 2) {
    if ((p[i + 1] > y) !== (p[j + 1] > y) &&
        x < (p[j] - p[i]) * (y - p[i + 1]) / (p[j + 1] - p[i + 1]) + p[i]) hit = !hit;
  }
  return hit;
}

// poly, colours, strike angle, bed length, bed thickness, share left empty
const box = (x, y, r, b) => [x, y, r, y, r, b, x, b];
const beds = [
  // upper strip
  [box(717, 553, 786, 599), '#ffffd2 #e8e4ff #f2ecb8 #ffffd2 #ffd6ff #ffffd2 #c8d465', -0.2, 20, 9, 0.3],
  [box(786, 553, 922, 599), '#ffff5e #ffe6b8 #ffff5e #f2cf0a #ffff5e #ffffc8 #a9c8cf #ffb0ff', 0.2, 34, 10, 0.14],
  [[786, 556, 840, 553, 838, 568, 786, 566], '#22eaff #ffff5e #22eaff', 0.1, 14, 5, 0.3],
  [box(855, 553, 922, 564), '#ffe9b8 #ffb9b9 #ffe9b8 #ffffc8', 0.1, 30, 4, 0.1],
  [[844, 572, 862, 568, 922, 560, 922, 598, 904, 598, 886, 590, 858, 592], '#00e8ff #00e8ff #ffffa8 #00e8ff', 0.2, 16, 6, 0.22],
  [box(922, 553, 1059, 599), '#8fdcff #ffff8a #d5ffe9 #ffffd0 #8fdcff #c5ffee', 0.2, 14, 7, 0.44],
  [[990, 560, 1004, 555, 1059, 566, 1059, 599, 1000, 599], '#c9ffe8 #d9fff0 #c9ffe8 #ffffc8', 0.5, 20, 7, 0.4],
  [box(1059, 553, 1126, 599), '#ffff3c #a0ff20 #ffff3c #a8ffe8 #ffe0a8', 0.3, 20, 9, 0.26],
  [[1059, 580, 1100, 578, 1126, 566, 1126, 599, 1059, 599], '#a8ffe8 #a8ffe8 #ffff3c', 0.3, 16, 6, 0.28],
  [[1084, 566, 1110, 562, 1120, 574, 1104, 580], '#ffff00 #ffb400', 0.3, 12, 6, 0.1],
  [[1095, 553, 1126, 553, 1126, 562, 1110, 560], '#ffc8ff #ffd6e8 #ffd640', 0.3, 16, 5, 0.1],
  [box(1126, 553, 1331, 599), '#ffff42 #ffd640 #ffffa0 #ffff42 #ffd0f8 #f5c400', 0.35, 22, 6, 0.2],
  [[1136, 568, 1180, 562, 1210, 570, 1240, 592, 1200, 580, 1150, 586], '#90ff20 #ffff42 #a8f020', 0.5, 14, 7, 0.3],
  [[1226, 553, 1331, 553, 1331, 599, 1258, 599, 1262, 580], '#ffd2fc #ffd2fc #ffd2fc #ffff58 #ffd2fc', 0.7, 28, 9, 0.16],
  // lower strip, western part
  [[547, 599, 640, 599, 640, 644, 565, 644], '#fff1cc #8cdcff #ffffc8 #ffd49b #30d8ff #d5d5d5', 0.3, 20, 6, 0.42],
  [[558, 627, 580, 628, 620, 634, 692, 636, 690, 644, 565, 644], '#00e8ff #00d0f8 #fff1cc #c4ee22', 0.15, 20, 5, 0.3],
  [[620, 599, 718, 599, 718, 644, 690, 644, 640, 634, 650, 612], '#ffc28a #fff1cc #ffffd0 #ffd49b #fff1cc', -0.3, 18, 6, 0.26],
  [box(690, 636, 718, 644), '#ffffd0 #ffd49b #fff1cc', 0, 18, 6, 0.2],
  [box(718, 599, 790, 644), '#ffffa0 #fff1a0 #ffffd0 #fff1a0 #ffffa0 #b8b8b8', 0.1, 18, 6, 0.24],
  [[724, 603, 762, 607, 768, 616, 750, 620, 726, 618], '#b9a000 #b9a000 #fff1a0', 0.1, 14, 5, 0.2],
  [[735, 636, 750, 634, 770, 638, 778, 644, 735, 644], '#8fe000 #a8e820', 0.1, 14, 4, 0.15],
  [box(786, 599, 922, 644), '#ffffc8 #e4ff54 #ffd900 #ffffc8 #94c0c8 #fff4a0 #c8bc00', 0.3, 28, 8, 0.12],
  [[822, 617, 860, 610, 900, 622, 912, 644, 880, 640, 838, 630], '#94c0c8 #94c0c8 #a3a3a3 #ffffc8', 0.1, 24, 6, 0.2],
  [[812, 613, 820, 612, 830, 626, 824, 628], '#ff6bff', 0, 9, 9, 0],
  // lower strip, eastern part
  [box(1126, 599, 1345, 644), '#ffff32 #ffd24a #f4d400 #ffff32 #ffffb8 #e8bc20', 0.4, 22, 6, 0.2],
  [[1126, 613, 1170, 613, 1200, 640, 1200, 644, 1126, 644], '#a5ffe0 #a5ffe0 #ffff32', 0.6, 16, 7, 0.22],
  [[1248, 612, 1300, 612, 1345, 644, 1220, 644], '#ffc8ff #f5b400 #ffc8ff #c8c8b4 #ffd24a', 0.6, 24, 5, 0.15],
  [[1256, 599, 1398, 599, 1398, 644, 1335, 644, 1290, 612], '#ffc8ff #ffd2fc #ffc8ff #cfcfc0', 0.7, 34, 7, 0.12],
  [box(1398, 599, 1468, 644), '#fff0e0 #fff0f0 #fff0e8 #ffffb8 #fff0e0', 0.9, 12, 6, 0.28],
  [box(1468, 599, 1604, 644), '#ffc8ff #ffacff #ffd2fc #ffc8ff #ffacff #ffc8ff #ffff58', 0.7, 44, 9, 0.06],
  [[1560, 599, 1604, 599, 1604, 622, 1580, 614], '#e4d820', 0.6, 20, 7, 0.06],
  [box(1604, 599, 1672, 644), '#ffff5c #ffff8a #ffa0b8 #ffff5c', 0.9, 8, 5, 0.26],
  [[1646, 599, 1672, 599, 1676, 644, 1664, 644, 1650, 620], '#ff9494 #ff9ac8 #ffa0b8 #ffff5c', 1.2, 14, 6, 0.14],
  [box(1672, 599, 1740, 644), '#f4b4b0 #f4d0ce #f8bdbd', 0.7, 44, 7, 0],
  [[1672, 599, 1690, 599, 1740, 622, 1740, 634], '#a0ff00 #ffff20 #a0ff00 #e8ffd0', 0.5, 24, 4, 0],
  [[1692, 599, 1740, 599, 1740, 619], '#ffc8c8 #e4e4ff #ffff58 #ffc8ff', 0.5, 24, 4, 0.1],
  [[1674, 620, 1712, 644, 1674, 644], '#ffe600 #dcc8ff #c8c8b0', 0.4, 12, 5, 0.1],
  [[1720, 640, 1730, 632, 1740, 632, 1740, 644, 1718, 644], '#f08000', 0, 8, 4, 0.1],
  // south-east corner
  [[1740, 666, 1782, 648, 1782, 665, 1745, 690, 1740, 690], '#d4c874 #a8a440 #d4c874 #ffb070', -0.6, 24, 6, 0.1],
  [[1782, 646, 1809, 644, 1809, 674, 1790, 668, 1780, 672], '#d49a30 #b9d8e8 #c8a050 #78b0b0 #f06ce8', -0.3, 12, 4, 0.25],
  [[1740, 648, 1756, 645, 1768, 644, 1752, 651], '#c88200', 0, 9, 5, 0],
  [[1756, 680, 1780, 662, 1809, 676, 1809, 684, 1745, 688], '#c0f0ec #ff78e8 #c0f0ec #c0f0ec', -0.3, 20, 6, 0.08],
  [[1744, 690, 1762, 680, 1809, 680, 1809, 690], '#c4f098 #b4e878 #c0f0ec', -0.1, 24, 7, 0.08],
  // central south
  [box(1126, 735, 1263, 753), '#60ffe0 #60ffe0 #ffffa0 #60ffe0 #a0ffd0', -0.1, 24, 7, 0.46],
  [[1200, 738, 1215, 735, 1263, 735, 1263, 739, 1210, 740], '#68e000', 0, 12, 4, 0.15],
  [[1196, 740, 1212, 739, 1222, 744, 1200, 748], '#00e8ff', 0, 12, 6, 0.2],
  [[1236, 747, 1263, 744, 1263, 753, 1240, 753], '#00e8ff', 0, 12, 6, 0.2],
  [[1130, 752, 1196, 752, 1192, 764, 1160, 772, 1134, 762], '#a8d0d8 #a8d0d8 #ffffa0', 0, 26, 4, 0.3],
  [[1196, 749, 1238, 746, 1263, 762, 1240, 754, 1200, 755], '#cecece', 0, 20, 5, 0.15],
  [box(1126, 755, 1263, 783), '#ffffa0', 0.2, 14, 6, 0.72],
  [box(990, 781, 1160, 798), '#ffffa0 #a0ff40 #ffff70 #ffffa0 #8ce8e0', 0.1, 24, 7, 0.64],
  [[1000, 785, 1014, 784, 1012, 787, 996, 788], '#e8b400', 0, 9, 9, 0],
  [[1070, 781, 1079, 781, 1074, 800, 1070, 794], '#ffff70', 0, 9, 9, 0.1],
  [[1090, 783, 1126, 788, 1180, 798, 1180, 808, 1100, 806], '#70ffff #ffffa0 #90ff40 #70ffff', 0.1, 20, 5, 0.5],
  [[1090, 783, 1150, 783, 1150, 790, 1110, 792], '#90ff40 #ffffa0', 0, 20, 5, 0.4],
  [[1166, 800, 1200, 799, 1198, 807, 1162, 806], '#80ffff', 0.1, 18, 5, 0.4],
  [[1196, 792, 1206, 790, 1204, 798, 1186, 796], '#80ffff', 0.1, 18, 5, 0.3],
  [[1204, 784, 1212, 788, 1220, 799, 1206, 792], '#98e8b0', 0.6, 20, 6, 0.1],
  [[1205, 778, 1256, 784, 1254, 788, 1220, 788], '#ffe098 #c8b8b8', 0.2, 20, 4, 0.15],
  [box(990, 805, 1150, 818), '#ffffa0 #a0ff40 #ffffa0', 0, 20, 5, 0.58],
  [[990, 818, 1040, 818, 1045, 826, 990, 826], '#b0ffd0 #ffd0d0 #ffffa0', -0.1, 16, 5, 0.3],
  [[1048, 813, 1090, 813, 1150, 817, 1205, 826, 1058, 826], '#ecb8d0 #e8c0d8 #ecb8d0', 0, 44, 5, 0],
  [[1256, 792, 1263, 798, 1263, 812, 1248, 822, 1210, 826, 1212, 820, 1244, 818, 1258, 808], '#ffffa0', 0, 6, 5, 0.6],
  // eastern arc
  [[1331, 735, 1370, 735, 1467, 826, 1400, 826, 1331, 784], '#e0e0d0 #a8d8d8 #ffffa0 #ffd0c8', 0.7, 24, 6, 0.7],
  [[1331, 742, 1360, 768, 1398, 790, 1370, 785, 1331, 768], '#d8ff70 #d0ffb0 #ffe060 #ffd0d8', 0.7, 30, 5, 0.2],
  [[1340, 735, 1367, 735, 1404, 765, 1420, 797, 1424, 812, 1400, 790, 1384, 758], '#ffd0d0 #ffc8ff #ffd0d0', 0.9, 44, 7, 0.08],
  [[1390, 752, 1410, 768, 1420, 795, 1402, 775], '#dda0ff', 0.9, 30, 8, 0],
  [[1382, 735, 1440, 735, 1450, 770, 1454, 826, 1440, 826, 1420, 770], '#88ffff #88ffff #d0e8e8 #ffd0d0', 0.9, 34, 6, 0.12],
  [[1425, 770, 1442, 758, 1450, 780, 1462, 826, 1444, 810], '#90ff20 #80ff00 #ffd870', 1.2, 16, 7, 0.14],
  [[1430, 735, 1448, 735, 1464, 770, 1467, 826, 1455, 826, 1452, 775], '#ffb0c8 #ffdc20 #ffb0c8 #ff98f0', 1.2, 22, 5, 0.14],
  [[1420, 780, 1432, 785, 1452, 826, 1436, 826], '#ffc0ff', 1, 30, 8, 0.02],
  [[1335, 785, 1375, 790, 1440, 826, 1380, 826], '#ffffa0 #c8b820 #a8d8d8', 0.6, 16, 6, 0.62],
  [box(1460, 735, 1467, 780), '#d0b000 #ffd080', 1.2, 14, 5, 0.65],
  [[1376, 826, 1384, 826, 1400, 842, 1396, 842, 1380, 834], '#a8d8d8 #ffffa0', 0.6, 12, 5, 0.5],
  [box(1340, 828, 1382, 868), '#ffffa0', 0.9, 12, 7, 0.78],
  // southern wedge
  [[1270, 835, 1276, 836, 1280, 866, 1300, 866, 1270, 878, 1263, 878], '#ffd0d0', 0, 20, 9, 0],
  [[1278, 832, 1318, 840, 1334, 860, 1316, 858, 1286, 866, 1276, 848], '#ffa8a8 #ff9898 #ffb0b0', 0.5, 20, 8, 0],
  [[1298, 841, 1308, 844, 1314, 852, 1302, 851], '#a3a3a3', 0, 9, 9, 0],
  [[1263, 873, 1298, 862, 1294, 867, 1263, 882], '#a8d0d8', 0, 9, 9, 0],
  [[1263, 878, 1298, 866, 1320, 856, 1322, 858, 1300, 872, 1263, 889], '#ffee88 #ffffd0', -0.4, 30, 6, 0],
  [[1280, 827, 1310, 834, 1334, 846, 1326, 847, 1300, 838, 1280, 830], '#98ff10', 0, 9, 9, 0],
  [[1330, 845, 1345, 852, 1356, 862, 1356, 867, 1342, 860], '#80ff80', 0, 9, 9, 0],
  [[1331, 858, 1341, 859, 1338, 862, 1332, 862], '#ff7878', 0, 9, 9, 0]
];

function drawMap() {
  const canvas = document.getElementById('map');
  canvas.width = canvas.parentElement.clientWidth;
  canvas.height = canvas.parentElement.clientHeight;
  const ctx = canvas.getContext('2d');
  ctx.translate(-316, -131);
  for (const [poly, list, angle, len, thick, empty] of beds) {
    const colors = list.split(' ');
    const xs = poly.filter((v, i) => i % 2 === 0), ys = poly.filter((v, i) => i % 2);
    const cos = Math.cos(angle), sin = Math.sin(angle);
    // ragged bed edges, but straight sheet edges
    const isBox = poly.length === 8 && poly[0] === poly[6] && poly[1] === poly[3] && poly[2] === poly[4];
    const rag = isBox || empty === 0 ? 0 : 10;
    for (let y = Math.min(...ys); y < Math.max(...ys); y += 1.5) {
      for (let x = Math.min(...xs); x < Math.max(...xs); x += 1.5) {
        const dx = (noise(x / 6, y / 4) - 0.5) * rag, dy = (noise(x / 6 + 40, y / 4) - 0.5) * rag / 2;
        if (!inside(poly, x + dx, y + dy)) continue;
        const u = (x * cos + y * sin) / len, v = (y * cos - x * sin) / thick;
        const gap = noise(u * 3 + 90, v * 2 + 7) * 0.7 + hash(x * 2 | 0, y * 2 | 0) * 0.3;
        if (gap < empty * 0.75 + 0.08 && empty > 0) continue;
        const n = noise(u, v) * 0.6 + noise(u * 2 + 31, v * 2) * 0.4 + (hash(x * 2 | 0, y * 3 | 0) - 0.5) * 0.12;
        const k = Math.max(0, Math.min(0.999, (n - 0.2) / 0.6));
        ctx.fillStyle = colors[Math.floor(k * colors.length)];
        ctx.fillRect(Math.floor(x), Math.floor(y), 2, 2);
      }
    }
  }
}

function redraw() {
  drawRulerH();
  drawRulerV();
  drawMap();
}
redraw();
window.addEventListener('resize', redraw);
```
